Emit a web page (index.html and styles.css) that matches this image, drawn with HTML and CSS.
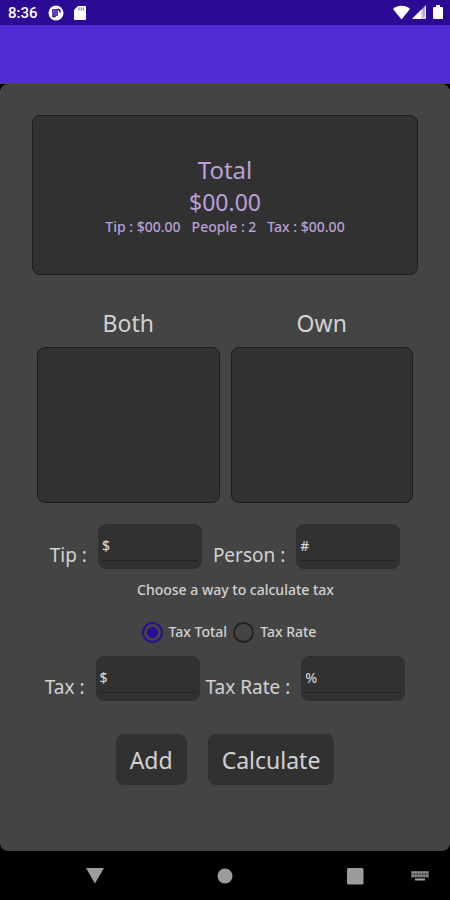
FILE: index.html
```html
<!DOCTYPE html>
<html lang="en">
<head>
<meta charset="utf-8">
<meta name="viewport" content="width=device-width, initial-scale=1">
<title>Tip Calculator</title>
<link rel="stylesheet" href="styles.css">
</head>
<body>
<div class="status">
  <span class="clock">8:36</span>
  <svg class="icon" width="16" height="16" viewBox="0 0 16 16" aria-hidden="true"><circle cx="8" cy="8" r="7.5" fill="#fff"/><path d="M5 4v7.500h2V4M9 11V4.500h1.500a1.500 1.500 0 0 1 1.500 1.500v1.500" fill="none" stroke="#2b0a94" stroke-width="1.500"/></svg>
  <svg class="icon" width="12" height="16" viewBox="0 0 12 16" aria-hidden="true"><path d="M4 1h7a1 1 0 0 1 1 1v12a1 1 0 0 1-1 1H1a1 1 0 0 1-1-1V5z" fill="#fff"/><path d="M5 2.500v3M7.200 2.500v3M9.400 2.500v3" stroke="#8d7bc4" stroke-width="1.200"/></svg>
  <span class="signals">
    <svg width="17" height="15" viewBox="0 0 17 15" aria-hidden="true"><path d="M0 4C4.500-.3 12.500-.3 17 4L8.500 14.500z" fill="#fff"/></svg>
    <svg width="15" height="15" viewBox="0 0 15 15" aria-hidden="true"><path d="M14 0v14H0z" fill="#a99bd6"/><path d="M9 5v9H0z" fill="#fff"/><path d="M10 4.500V13h3.300V1.200" fill="none" stroke="#fff"/></svg>
    <svg width="10" height="15" viewBox="0 0 10 15" aria-hidden="true"><path d="M3 0h4v2h2a1 1 0 0 1 1 1v10a1 1 0 0 1-1 1H1a1 1 0 0 1-1-1V3a1 1 0 0 1 1-1h2z" fill="#fff"/></svg>
  </span>
</div>
<header class="appbar"></header>
<main class="panel">
  <section class="summary">
    <h1 class="summary-title">Total</h1>
    <p class="summary-amount">$00.00</p>
    <p class="summary-details"><span>Tip : $00.00</span><span>People : 2</span><span>Tax : $00.00</span></p>
  </section>
  <div class="lists">
    <section class="list"><h2 class="list-title">Both</h2><div class="list-box"></div></section>
    <section class="list"><h2 class="list-title">Own</h2><div class="list-box"></div></section>
  </div>
  <form class="form">
    <div class="fields">
      <label class="label" for="tip">Tip :</label>
      <div class="field"><input class="input" id="tip" type="text" placeholder="$"></div>
      <label class="label" for="person">Person :</label>
      <div class="field"><input class="input" id="person" type="text" placeholder="#"></div>
    </div>
    <fieldset class="choices">
      <legend class="legend">Choose a way to calculate tax</legend>
      <div class="options">
        <label class="option"><input class="radio" type="radio" name="mode" checked>Tax Total</label>
        <label class="option"><input class="radio" type="radio" name="mode">Tax Rate</label>
      </div>
    </fieldset>
    <div class="fields fields-tax">
      <label class="label" for="tax">Tax :</label>
      <div class="field"><input class="input" id="tax" type="text" placeholder="$"></div>
      <label class="label" for="rate">Tax Rate :</label>
      <div class="field"><input class="input" id="rate" type="text" placeholder="%"></div>
    </div>
    <div class="actions">
      <button class="button" type="button">Add</button>
      <button class="button" type="button">Calculate</button>
    </div>
  </form>
</main>
<nav class="navbar">
  <button class="nav-button" type="button" aria-label="Back"><svg width="18" height="16" viewBox="0 0 18 16"><path d="M0 0h18L9 15.500z" fill="#9c9c9c"/></svg></button>
  <button class="nav-button" type="button" aria-label="Home"><svg width="16" height="16" viewBox="0 0 16 16"><circle cx="8" cy="8" r="7.500" fill="#9c9c9c"/></svg></button>
  <button class="nav-button" type="button" aria-label="Recent apps"><svg width="18" height="18" viewBox="0 0 18 18"><rect x="1" y="1" width="16.500" height="16.500" rx="1.500" fill="#9c9c9c"/></svg></button>
  <button class="nav-button nav-keyboard" type="button" aria-label="Keyboard"><svg width="18" height="12" viewBox="0 0 18 12"><path d="M0 1h18v6.500H0z" fill="#555"/><path d="M1 2.500h16M1 5.800h16" stroke="#999" stroke-width="1.800" stroke-dasharray="1.800 1"/><path d="M4 9.500h10" stroke="#a5a5a5" stroke-width="2"/></svg></button>
</nav>
</body>
</html>
```
FILE: styles.css
```css
* {
  box-sizing: border-box;
}

body {
  margin: 0;
  min-height: 100vh;
  display: flex;
  flex-direction: column;
  background: #000;
  color: #d2d2d2;
  font-family: "Noto Sans", "Open Sans", sans-serif;
}

h1, h2, p {
  margin: 0;
  font-weight: 400;
}

svg {
  display: block;
}

.status {
  height: 25px;
  padding: 0 7px 0 8px;
  display: flex;
  align-items: center;
  gap: 10px;
  background: #2b0a94;
  color: #fff;
}

.clock {
  font: 500 15px/24px Roboto, sans-serif;
}

.signals {
  margin-left: auto;
  display: flex;
  gap: 2px;
}

.signals :last-child {
  margin-left: 4px;
}

.appbar {
  height: 59px;
  background: #512bd4;
}

.panel {
  flex: 1;
  padding: 31px 32px 0;
  border-radius: 8px;
  background: #444;
}

.summary {
  height: 160px;
  display: flex;
  flex-direction: column;
  align-items: center;
  justify-content: center;
  border: 1px solid #1c1c1c;
  border-radius: 8px;
  background: #313131;
  color: #b9a0d8;
}

.summary-title {
  font-size: 24px;
  line-height: 32px;
}

.summary-amount {
  font-size: 23px;
  line-height: 32px;
}

.summary-details {
  display: flex;
  gap: 11px;
  font-size: 14px;
  font-weight: 500;
  line-height: 18px;
}

.lists {
  display: grid;
  grid-template-columns: 1fr 1fr;
  gap: 11px;
  padding: 32px 5px 0;
}

.list-title {
  font-size: 23px;
  line-height: 32px;
  text-align: center;
}

.list-box {
  height: 156px;
  margin-top: 8px;
  border: 1px solid #1c1c1c;
  border-radius: 8px;
  background: #313131;
}

.form {
  padding-top: 21px;
}

.fields {
  display: flex;
  justify-content: center;
  gap: 11px;
}

.fields-tax {
  margin: 0 -20px;
}

.fields-tax .field:nth-child(2) {
  margin-right: -5px;
}

.label {
  padding-top: 18px;
  font-size: 19px;
  line-height: 26px;
  white-space: nowrap;
}

.field {
  width: 104px;
  height: 45px;
  padding: 0 4px 8px;
  border-radius: 8px;
  background: #313131;
}

.input {
  display: block;
  width: 100%;
  height: 37px;
  padding: 7px 0 0;
  border: 0;
  border-bottom: 1px solid #222;
  background: none;
  color: #d2d2d2;
  font: 500 14px/20px "Noto Sans", "Open Sans", sans-serif;
}

.input::placeholder {
  color: #d2d2d2;
  opacity: 1;
}

.choices {
  margin: 0;
  padding: 0;
  border: 0;
}

.legend {
  margin: 0 auto;
  padding: 11px 0 0 21px;
  font-size: 14px;
  font-weight: 500;
  line-height: 20px;
}

.options {
  height: 56px;
  display: flex;
  align-items: center;
  justify-content: center;
  gap: 6px;
  padding: 8px 0 0 8px;
}

.option {
  display: flex;
  align-items: center;
  gap: 6px;
  font-size: 14px;
  font-weight: 500;
  line-height: 20px;
}

.radio {
  appearance: none;
  width: 21px;
  height: 21px;
  margin: 0;
  border: 2px solid #222;
  border-radius: 50%;
}

.radio:checked {
  border-color: #2b0b98;
  background: radial-gradient(circle, #2b0b98 5px, transparent 6px);
}

.actions {
  display: flex;
  justify-content: center;
  gap: 21px;
  padding-top: 33px;
}

.button {
  height: 51px;
  padding: 0 14px;
  border: 0;
  border-radius: 8px;
  background: #313131;
  color: #d2d2d2;
  font: 23px/32px "Noto Sans", "Open Sans", sans-serif;
}

.navbar {
  height: 49px;
  display: grid;
  grid-template-columns: 1fr 1fr 1fr 30px;
  padding-left: 30px;
}

.nav-button {
  display: flex;
  align-items: center;
  justify-content: center;
  padding: 0;
  border: 0;
  background: none;
}

.nav-keyboard {
  justify-content: flex-start;
  margin-left: -9px;
}
```
